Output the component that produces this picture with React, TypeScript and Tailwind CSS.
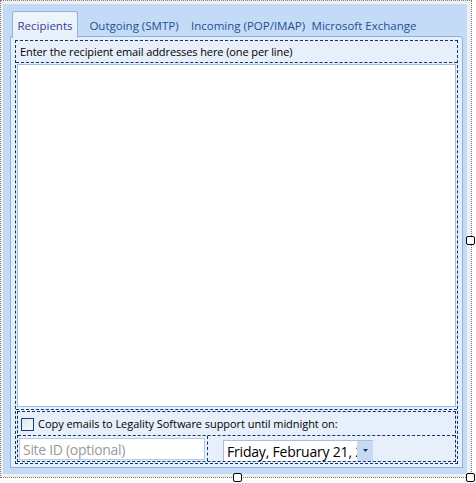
import React from 'react';

const tabs = [
  { label: 'Recipients', width: 'w-[66px]', active: true },
  { label: 'Outgoing (SMTP)', width: 'w-[112px]', active: false },
  { label: 'Incoming (POP/IMAP)', width: 'w-[116px]', active: false },
  { label: 'Microsoft Exchange', width: 'w-[116px]', active: false },
];

const Handle: React.FC<{ className: string }> = ({ className }) => (
  <div className={`absolute w-[9px] h-[9px] bg-white border border-black rounded-[2px] ${className}`} />
);

export default function App() {
  return (
    <div className="relative w-[476px] h-[483px] bg-white font-['Open_Sans',sans-serif] text-[11px] text-black">
      {/* designer selection frame */}
      <div className="w-[472px] h-[478px] border border-dotted border-[#7a7a7a] bg-[#f0f0f0] pl-[2px] pr-[4px] pt-[3px] pb-[3px]">
        <div className="h-full bg-[#c4dbf8] pt-[7px] pl-[7px] pr-[4px] pb-[6px] flex flex-col">
          {/* tab strip */}
          <div className="flex h-[26px] pl-[2px] -mb-[1px] relative z-10 text-[11.5px]">
            {tabs.map((t) =>
              t.active ? (
                <div
                  key={t.label}
                  className={`${t.width} h-[27px] flex items-center justify-center pt-[1px] rounded-t-[3px] border border-b-0 border-[#8fb1de] bg-gradient-to-b from-[#f0f5fc] to-[#e7effa] text-[#363f94] whitespace-nowrap`}
                >
                  {t.label}
                </div>
              ) : (
                <div
                  key={t.label}
                  className={`${t.width} h-[26px] flex items-center justify-center pt-[3px] text-[#1f4f8f] whitespace-nowrap`}
                >
                  {t.label}
                </div>
              )
            )}
          </div>

          {/* tab page */}
          <div className="flex-1 flex flex-col border border-[#8fb1de] rounded-tr-[3px] bg-[#e7effa] pt-[3px] pl-[4px] pr-[4px] pb-[3px]">
            <div className="flex-1 flex flex-col border border-dashed border-[#0f3468]">
              <div className="h-[22px] shrink-0 flex items-center pl-[4px] pt-[2px] border-b border-dashed border-[#0f3468] whitespace-nowrap tracking-[-0.1px]">
                Enter the recipient email addresses here (one per line)
              </div>

              <div className="flex-1 flex flex-col px-[1px] pt-[1px] pb-[2px] border-b border-dashed border-[#0f3468]">
                <textarea className="flex-1 w-full resize-none bg-white border border-[#9dbbe4] outline-none" />
              </div>

              <div className="h-[53px] shrink-0 p-[1px]">
                <div className="h-full flex flex-col border border-dashed border-[#0f3468]">
                  <div className="h-[24px] shrink-0 flex items-center gap-[4px] pl-[3px] pt-[1px] border-b border-dashed border-[#0f3468] whitespace-nowrap">
                    <span className="w-[13px] h-[13px] border border-[#1c3f73] bg-gradient-to-br from-[#dfe6f0] to-[#f8fafd]" />
                    <span className="pt-[1px] tracking-[-0.05px]">Copy emails to Legality Software support until midnight on:</span>
                  </div>
                  <div className="flex-1 flex min-h-0">
                    <div className="w-[190px] shrink-0 pl-[1px] pt-[2px] pb-[1px] pr-[2px] border-r border-dashed border-[#0f3468]">
                      <div className="h-full bg-white border border-[#b6cae6] flex items-center pl-[3px] pt-[1px] text-[14px] tracking-[-0.3px] text-[#9a9a9a] whitespace-nowrap">
                        Site ID (optional)
                      </div>
                    </div>
                    <div className="flex-1 overflow-hidden pl-[15px] pt-[4px]">
                      <div className="w-[150px] h-[22px] flex bg-white border-t border-l border-[#a9bfdc]">
                        <div className="w-[133px] overflow-hidden pl-[3px] pt-[1px] text-[14px] tracking-[-0.2px] leading-[20px] whitespace-nowrap">
                          Friday, February 21, 2
                        </div>
                        <div className="w-[16px] h-full bg-[#c6daf4] flex items-start justify-center pt-[8px]">
                          <svg width="7" height="4" viewBox="0 0 7 4">
                            <path d="M1 0 H6 L3.5 3 Z" fill="#1d3560" />
                          </svg>
                        </div>
                      </div>
                    </div>
                  </div>
                </div>
              </div>
            </div>
          </div>
        </div>
      </div>

      <Handle className="left-[466px] top-[236px]" />
      <Handle className="left-[233px] top-[473px]" />
      <Handle className="left-[466px] top-[473px]" />
    </div>
  );
}
